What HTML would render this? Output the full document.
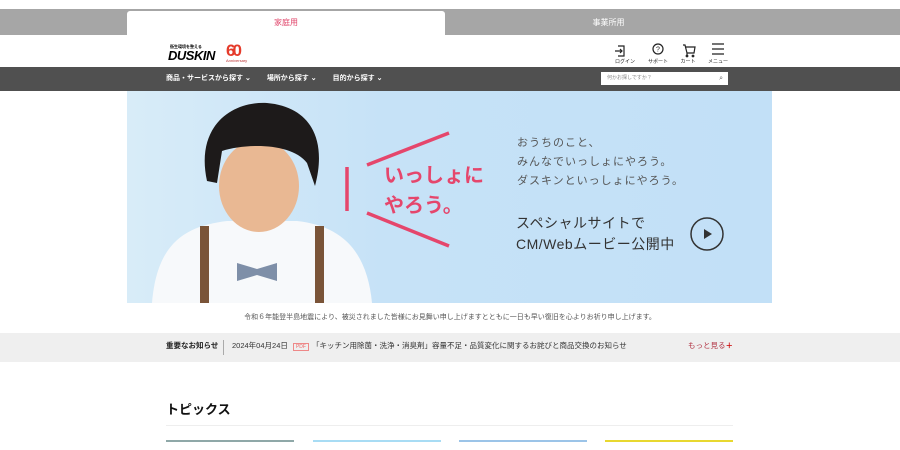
<!DOCTYPE html>
<html><head><meta charset="utf-8"><style>
*{margin:0;padding:0;box-sizing:border-box}
body{width:900px;height:450px;overflow:hidden;background:#fff;font-family:"Liberation Sans","Noto Sans CJK JP",sans-serif;position:relative}
.a{position:absolute}
</style></head><body>
<div class="a" style="left:0;top:9px;width:900px;height:26px;background:#a6a6a6"></div>
<div class="a" style="left:127px;top:11px;width:318px;height:24px;background:#fff;border-radius:3px 3px 0 0;text-align:center;font-size:8px;line-height:24px;color:#e0446a">家庭用</div>
<div class="a" style="left:445px;top:11px;width:327px;height:24px;text-align:center;font-size:8px;line-height:24px;color:#fff">事業所用</div>
<div class="a" style="left:170px;top:44px;font-size:4px;color:#000;font-weight:bold">衛生環境を整える</div>
<div class="a" style="left:168px;top:48px;font-size:13px;font-weight:bold;font-style:italic;color:#000;letter-spacing:-0.5px">DUSKIN</div>
<div class="a" style="left:226px;top:41px;font-size:17px;font-weight:bold;color:#e53b2b;letter-spacing:-3px">60</div>
<div class="a" style="left:226px;top:58px;font-size:4px;color:#b33">Anniversary</div>
<svg class="a" style="left:612px;top:41px" width="120" height="24" viewBox="0 0 120 24">
<g fill="none" stroke="#222" stroke-width="1.2">
<path d="M6 5h6v10H6M3 10h7M8 8l2 2-2 2"/>
<circle cx="46" cy="8" r="5"/>
<path d="M71 4h2l2 8h7l1-6h-9M75 12v2"/><circle cx="75" cy="15" r="0.8"/><circle cx="81" cy="15" r="0.8"/>
<path d="M100 3h12M100 8h12M100 13h12"/></g>
<text x="46" y="10.5" font-size="7" text-anchor="middle" fill="#222" font-family="Liberation Sans">?</text>
<g font-size="5" fill="#222" text-anchor="middle" font-family="Noto Sans CJK JP"><text x="13" y="22">ログイン</text><text x="46" y="22">サポート</text><text x="76" y="22">カート</text><text x="106" y="22">メニュー</text></g>
</svg>
<div class="a" style="left:0;top:67px;width:900px;height:24px;background:#505050"></div>
<div class="a" style="left:166px;top:67px;line-height:24px;font-size:7px;color:#fff;font-weight:bold;word-spacing:0">商品・サービスから探す ⌄<span style="margin-left:16px">場所から探す ⌄</span><span style="margin-left:16px">目的から探す ⌄</span></div>
<div class="a" style="left:601px;top:72px;width:127px;height:13px;background:#fff;font-size:5px;color:#888;padding-left:6px;line-height:13px">何かお探しですか？<span style="position:absolute;right:5px;color:#666;font-size:7px">⌕</span></div>
<div class="a" style="left:127px;top:91px;width:645px;height:212px;background:linear-gradient(90deg,#d8ecf8 0%,#c6e2f7 40%,#c2e0f7 100%);overflow:hidden">
 <svg class="a" style="left:0;top:0" width="260" height="212">
  <path d="M25 212 C30 150 60 135 100 130 L170 130 C215 135 240 160 245 212Z" fill="#f7f9fb"/>
  <ellipse cx="132" cy="95" rx="40" ry="46" fill="#e9b893"/>
  <path d="M80 90 C68 35 105 10 140 12 C185 16 200 50 188 95 L180 72 C165 52 120 52 95 60 L90 92Z" fill="#1d1a1a"/>
  <rect x="73" y="135" width="9" height="77" fill="#7a5438"/>
  <rect x="188" y="135" width="9" height="77" fill="#7a5438"/>
  <path d="M110 172 L130 178 L150 172 L150 190 L130 184 L110 190Z" fill="#7e8fa8"/>
 </svg>
 <svg class="a" style="left:215px;top:40px" width="120" height="120"><g stroke="#e5466c" stroke-width="3.5" fill="none"><path d="M25 34 L107 2M5 36 V80M25 82 L107 115"/></g></svg>
 <div class="a" style="left:257px;top:70px;font-size:20px;line-height:30px;font-weight:bold;color:#e5466c">いっしょに<br>やろう。</div>
 <div class="a" style="left:390px;top:43px;font-size:11px;line-height:19px;color:#555;letter-spacing:1px">おうちのこと、<br>みんなでいっしょにやろう。<br>ダスキンといっしょにやろう。</div>
 <div class="a" style="left:389px;top:122px;font-size:14px;line-height:21px;color:#333;letter-spacing:0.5px">スペシャルサイトで<br>CM/Webムービー公開中</div>
 <svg class="a" style="left:562px;top:125px" width="36" height="36"><circle cx="18" cy="18" r="16" fill="none" stroke="#333" stroke-width="1.5"/><path d="M15 13 L23 18 L15 23Z" fill="#333"/></svg>
</div>
<div class="a" style="left:0;top:312px;width:900px;text-align:center;font-size:7px;color:#555">令和６年能登半島地震により、被災されました皆様にお見舞い申し上げますとともに一日も早い復旧を心よりお祈り申し上げます。</div>
<div class="a" style="left:0;top:333px;width:900px;height:29px;background:#efefef"></div>
<div class="a" style="left:166px;top:340px;font-size:7.5px;font-weight:bold;color:#222">重要なお知らせ</div>
<div class="a" style="left:223px;top:340px;width:1px;height:15px;background:#aaa"></div>
<div class="a" style="left:232px;top:340px;font-size:7.5px;color:#333">2024年04月24日 <span style="border:1px solid #e88;color:#e66;font-size:5px;padding:0 2px;margin:0 3px">PDF</span>「キッチン用除菌・洗浄・消臭剤」容量不足・品質変化に関するお詫びと商品交換のお知らせ</div>
<div class="a" style="left:688px;top:340px;font-size:7.5px;color:#b03040">もっと見る<b style="color:#c00">＋</b></div>
<div class="a" style="left:166px;top:399px;font-size:13px;font-weight:bold;color:#111">トピックス</div>
<div class="a" style="left:166px;top:425px;width:567px;height:1px;background:#eee"></div>
<div class="a" style="left:166px;top:440px;width:128px;height:2px;background:#8fa8a8"></div>
<div class="a" style="left:313px;top:440px;width:128px;height:2px;background:#a8dcf4"></div>
<div class="a" style="left:459px;top:440px;width:128px;height:2px;background:#9cc4e8"></div>
<div class="a" style="left:605px;top:440px;width:128px;height:2px;background:#e8d830"></div>
</body></html>
